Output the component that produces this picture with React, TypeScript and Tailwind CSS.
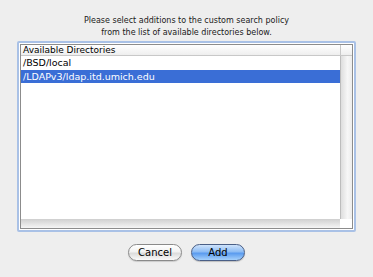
export default function App() {
  const rows = ["/BSD/local", "/LDAPv3/ldap.itd.umich.edu"];
  const selected = 1;

  return (
    <div className="w-[373px] h-[277px] bg-[#eeeeee] bg-[radial-gradient(#dcdcdc_0.7px,transparent_0.7px)] bg-[size:4px_4px] flex flex-col items-center font-['Lucida_Grande','DejaVu_Sans',sans-serif] text-black">
      <p className="mt-[15px] text-center text-[8px] leading-[12px] text-[#1a1a1a]">
        Please select additions to the custom search policy
        <br />
        from the list of available directories below.
      </p>

      <div className="mt-[2px] w-[339px] h-[191px] rounded-[2px] border-[2px] border-[#a9c1e6] bg-white p-px flex flex-col">
        <div className="flex-1 flex border border-[#8c8c8c] min-h-0">
          <div className="flex-1 flex flex-col min-w-0">
            <div className="flex-1 flex flex-col">
              <div className="h-[11px] flex items-center border-b border-[#c8c8c8] bg-[linear-gradient(#ffffff,#eeeeee)] text-[9px] leading-none pl-[2px]">
                Available Directories
              </div>
              {rows.map((r, i) => (
                <div
                  key={r}
                  className={`h-[13px] flex items-center pl-[2px] text-[9.5px] leading-none ${
                    i === selected ? "bg-[#3a6ed6] text-white mt-px" : ""
                  }`}
                >
                  {r}
                </div>
              ))}
            </div>
            <div className="h-[9px] bg-[linear-gradient(#cfcfcf,#f5f5f5)]" />
          </div>
          <div className="w-[12px] flex flex-col">
            <div className="h-[11px] border-l border-b border-[#c8c8c8] bg-[linear-gradient(#ffffff,#eeeeee)]" />
            <div className="flex-1 border-l border-[#bdbdbd] bg-[linear-gradient(90deg,#dedede,#f7f7f7_60%,#ececec)]" />
            <div className="h-[9px] bg-white" />
          </div>
        </div>
      </div>

      <div className="mt-[12px] flex gap-[9px]">
        <button className="w-[54px] h-[17px] rounded-full border border-[#8a8a8a] bg-[linear-gradient(#ffffff,#f2f2f2_45%,#dcdcdc_55%,#fafafa)] text-[10px] leading-none text-black shadow-[0_1px_1px_rgba(0,0,0,0.15)]">
          Cancel
        </button>
        <button className="w-[54px] h-[17px] rounded-full border border-[#4a5f86] bg-[linear-gradient(#cfe3fb,#8dbcf4_45%,#5a9bef_55%,#a6d1fb)] text-[10px] leading-none text-black shadow-[0_1px_1px_rgba(0,0,0,0.2)]">
          Add
        </button>
      </div>
    </div>
  );
}
